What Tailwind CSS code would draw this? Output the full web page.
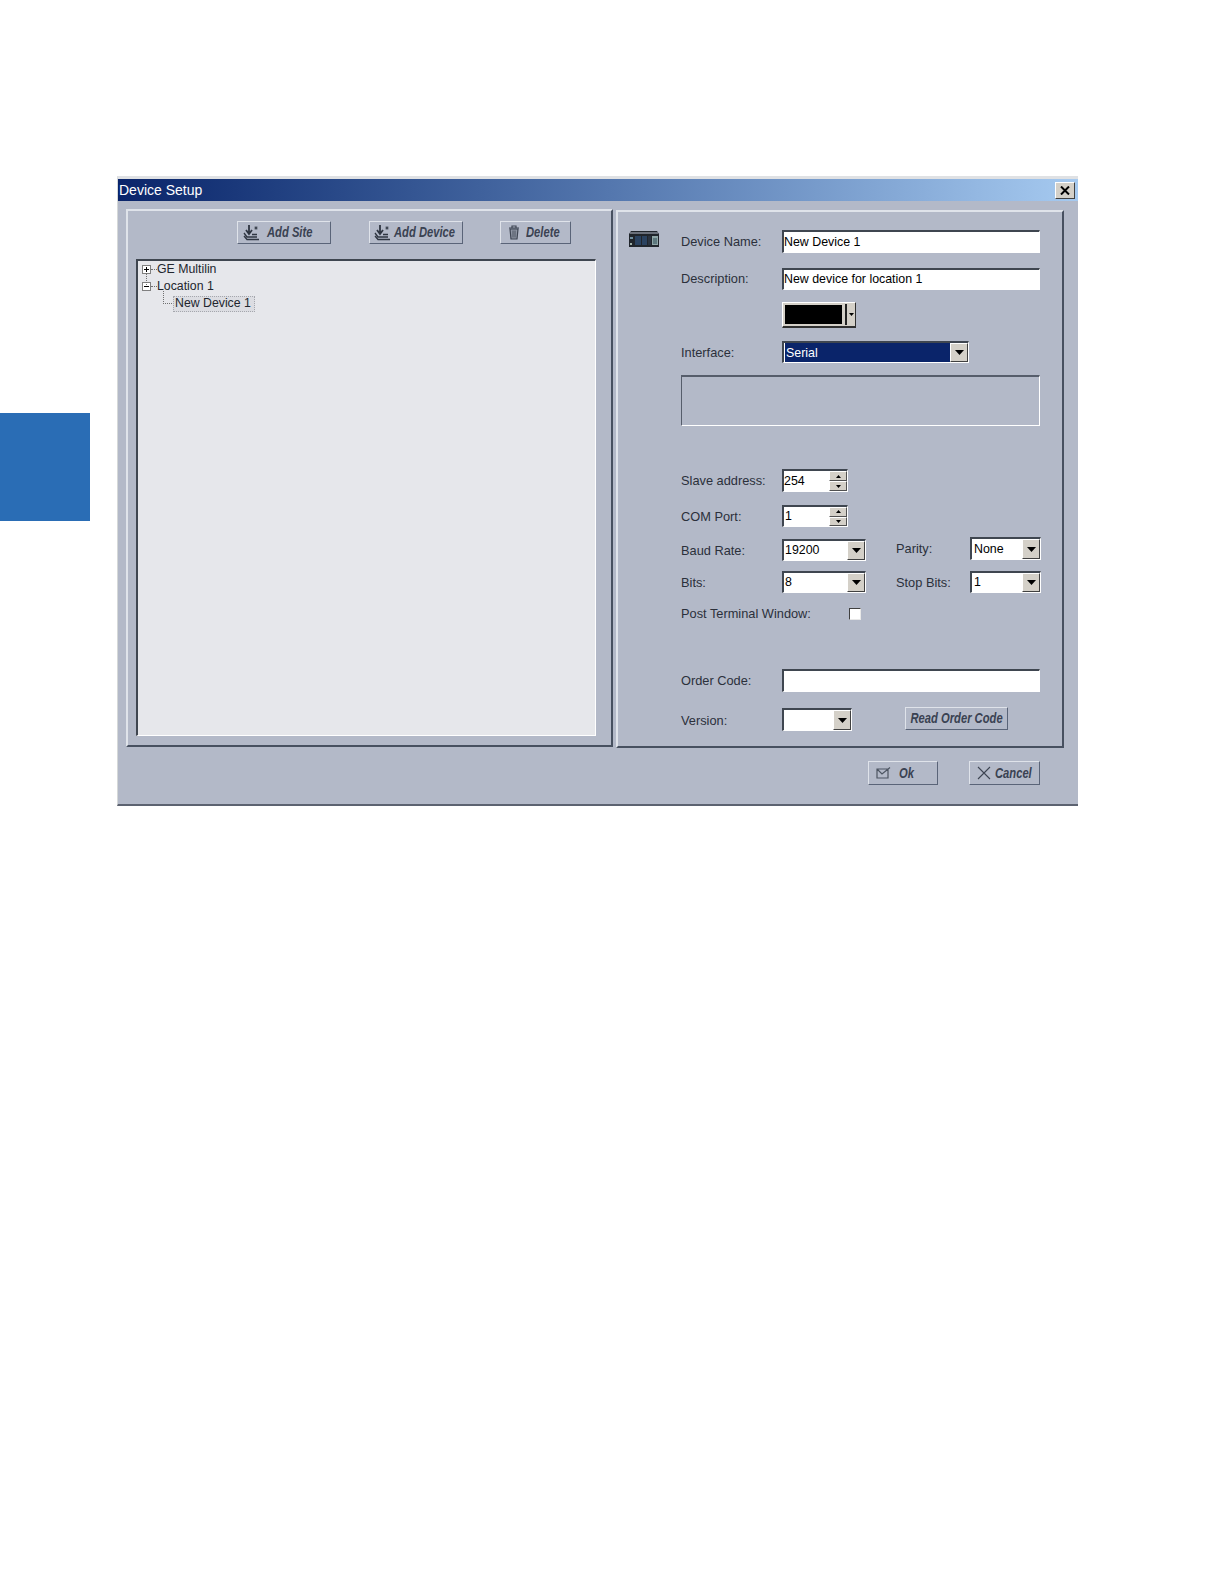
<!DOCTYPE html>
<html lang="en">
<head>
  <meta charset="UTF-8" />
  <title>Device Setup</title>
  <script src="https://cdn.jsdelivr.net/npm/@tailwindcss/browser@4"></script>
</head>
<body class="bg-white min-h-screen flex items-start [font-family:'Liberation_Sans',Arial,sans-serif] text-[12.8px] text-[#2b303b]">

  <!-- chapter tab -->
  <div class="w-[90px] h-[108px] mt-[413px] shrink-0 bg-[#2a6db5]"></div>

  <!-- dialog window -->
  <div class="ml-[27px] mt-[176px] w-[961px] h-[630px] shrink-0 bg-[#b3b9c8] border-t-[3px] border-t-[#dfe1e4] border-l border-l-[#d5d8d8] border-b-2 border-b-[#5c6270]">

    <!-- title bar -->
    <div class="h-[22px] flex items-center justify-between bg-gradient-to-r from-[#0a246a] to-[#a6caf0] pr-[3px]">
      <span class="text-white text-[14px] pl-px">Device Setup</span>
      <button class="w-[20px] h-[17px] flex items-center justify-center bg-[#d4d0c8] border border-t-white border-l-white border-r-[#404040] border-b-[#404040]">
        <svg width="10" height="9" viewBox="0 0 10 9"><path d="M1 0.5 L9 8.5 M9 0.5 L1 8.5" stroke="#000" stroke-width="2" /></svg>
      </button>
    </div>

    <div class="flex pl-[8px] pt-[8px]">

      <!-- left panel -->
      <div class="w-[487px] h-[538px] border-2 border-t-[#dfe3ea] border-l-[#dfe3ea] border-r-[#475060] border-b-[#475060]">
        <div class="flex ml-[109px] mt-[10px]">
          <button class="w-[94px] h-[23px] flex items-center pl-[5px] gap-[7px] border border-t-[#dfe3ea] border-l-[#dfe3ea] border-r-[#5a6478] border-b-[#5a6478] text-[#3a4252] font-bold italic text-[14px] whitespace-nowrap">
            <svg class="shrink-0" width="17" height="17" viewBox="0 0 17 17" fill="none" stroke="#2f3642"><path d="M6 1 V9 M3 6 L6 10 L9 6" stroke-width="1.8" /><path d="M1 9 L4 13 H14 M1 12 L4 15.5 H16 M9 10.5 H14" stroke-width="1.3" /><path d="M13 2 V6 M11.2 4 H14.8 M11.8 2.8 L14.2 5.2 M14.2 2.8 L11.8 5.2" stroke-width="0.7" /></svg>
            <span class="inline-block origin-left scale-x-[0.8]">Add Site</span>
          </button>
          <button class="w-[94px] h-[23px] ml-[38px] flex items-center pl-[4px] gap-[3px] border border-t-[#dfe3ea] border-l-[#dfe3ea] border-r-[#5a6478] border-b-[#5a6478] text-[#3a4252] font-bold italic text-[14px] whitespace-nowrap">
            <svg class="shrink-0" width="17" height="17" viewBox="0 0 17 17" fill="none" stroke="#2f3642"><path d="M6 1 V9 M3 6 L6 10 L9 6" stroke-width="1.8" /><path d="M1 9 L4 13 H14 M1 12 L4 15.5 H16 M9 10.5 H14" stroke-width="1.3" /><path d="M13 2 V6 M11.2 4 H14.8 M11.8 2.8 L14.2 5.2 M14.2 2.8 L11.8 5.2" stroke-width="0.7" /></svg>
            <span class="inline-block origin-left scale-x-[0.8]">Add Device</span>
          </button>
          <button class="w-[71px] h-[23px] ml-[37px] flex items-center pl-[7px] gap-[6px] border border-t-[#dfe3ea] border-l-[#dfe3ea] border-r-[#5a6478] border-b-[#5a6478] text-[#3a4252] font-bold italic text-[14px] whitespace-nowrap">
            <svg class="shrink-0" width="12" height="15" viewBox="0 0 12 15" fill="none" stroke="#3d4452"><path d="M1 3 H11 M4 3 V1 H8 V3" stroke-width="1.2" /><path d="M2 4 L3 14 H9 L10 4 Z" fill="#8d94a3" stroke-width="1.2" /><path d="M5 5.5 V12.5 M7 5.5 V12.5" stroke-width="0.8" /></svg>
            <span class="inline-block origin-left scale-x-[0.8]">Delete</span>
          </button>
        </div>

        <!-- tree -->
        <div class="relative w-[460px] h-[477px] ml-[8px] mt-[15px] text-[12.3px] bg-[#e6e7eb] border-t-2 border-l-2 border-t-[#3f4650] border-l-[#3f4650] border-r border-b border-r-white border-b-white text-[#22262e]">
          <div class="absolute left-[8px] top-[12px] h-[12px] border-l border-dotted border-[#707070]"></div>
          <div class="absolute left-[25px] top-[30px] h-[13px] w-[9px] border-l border-b border-dotted border-[#707070]"></div>

          <div class="h-[17px] flex items-center pl-[4px]">
            <span class="w-[9px] h-[9px] bg-white border border-[#808080] flex items-center justify-center">
              <svg width="7" height="7" viewBox="0 0 7 7"><path d="M1 3.5 H6 M3.5 1 V6" stroke="#000" /></svg>
            </span>
            <span class="w-[6px] border-t border-dotted border-[#707070]"></span>
            <span class="whitespace-nowrap">GE Multilin</span>
          </div>
          <div class="h-[17px] flex items-center pl-[4px]">
            <span class="w-[9px] h-[9px] bg-white border border-[#808080] flex items-center justify-center">
              <svg width="7" height="7" viewBox="0 0 7 7"><path d="M1 3.5 H6" stroke="#000" /></svg>
            </span>
            <span class="w-[6px] border-t border-dotted border-[#707070]"></span>
            <span class="whitespace-nowrap">Location 1</span>
          </div>
          <div class="h-[17px] flex items-center pl-[35px]">
            <span class="h-[16px] w-[82px] pl-[1px] flex items-center whitespace-nowrap bg-[#dcdde2] border border-dotted border-[#a5a7ad]">New Device 1</span>
          </div>
        </div>
      </div>

      <!-- right panel -->
      <div class="flex ml-[3px] mt-px w-[448px] h-[538px] border-2 border-t-[#dfe3ea] border-l-[#dfe3ea] border-r-[#475060] border-b-[#475060]">
        <div class="w-[63px] pl-[11px] pt-[19px] shrink-0">
          <svg width="30" height="16" viewBox="0 0 30 16">
            <path d="M2 0 H28 L30 3 V16 H0 V3 Z" fill="#20252c" />
            <rect x="1" y="1" width="28" height="2" fill="#6a707b" />
            <rect x="1" y="6" width="3" height="2" fill="#6f8fa0" />
            <rect x="1" y="12" width="2" height="2" fill="#9fb0a8" />
            <rect x="6" y="5" width="6" height="9" fill="#2a4260" />
            <rect x="13" y="5" width="5" height="9" fill="#2a4260" />
            <rect x="19" y="5" width="3" height="9" fill="#2a3340" />
            <rect x="23" y="5" width="6" height="9" fill="#8fa6a8" />
            <path d="M24 8 H28 M24 10 H28 M24 12 H28" stroke="#2c4a55" />
          </svg>
        </div>

        <div class="flex flex-col">
          <div class="flex items-center mt-[18px]">
            <span class="w-[101px] pt-[1px]">Device Name:</span>
            <div class="w-[258px] h-[23px] flex items-center text-[12.4px] bg-white text-black border-t-2 border-l-2 border-t-[#3f4650] border-l-[#3f4650] border-r border-b border-r-white border-b-white">New Device 1</div>
          </div>
          <div class="flex items-center mt-[15px]">
            <span class="w-[101px]">Description:</span>
            <div class="w-[258px] h-[22px] flex items-center text-[12.4px] bg-white text-black border-t-2 border-l-2 border-t-[#3f4650] border-l-[#3f4650] border-r border-b border-r-white border-b-white">New device for location 1</div>
          </div>

          <!-- colour picker -->
          <div class="flex mt-[12px] pl-[101px]">
            <div class="w-[74px] h-[26px] flex items-center pl-[2px] bg-[#d4d0c8] border border-t-white border-l-white border-r-[#303030] border-b-[#303030] border-b-2">
              <div class="w-[57px] h-[19px] bg-black"></div>
              <div class="w-[2px] h-[21px] ml-[3px] bg-[#222]"></div>
              <svg class="ml-[2px]" width="5" height="3" viewBox="0 0 5 3"><path d="M0 0 H5 L2.5 3 Z" fill="#000" /></svg>
            </div>
          </div>

          <div class="flex items-center mt-[13px]">
            <span class="w-[101px] pt-[2px]">Interface:</span>
            <div class="w-[187px] h-[22px] flex items-center justify-between text-[12.4px] bg-white border-t-2 border-l-2 border-t-[#3f4650] border-l-[#3f4650] border-r border-b border-r-white border-b-white">
              <span class="flex-1 h-full ml-px flex items-center pl-px pt-px bg-[#0a246a] text-white">Serial</span>
              <span class="w-[18px] h-full flex items-center justify-center bg-[#d4d0c8] border border-t-white border-l-white border-r-[#404040] border-b-[#404040]">
                <svg width="9" height="5" viewBox="0 0 9 5"><path d="M0 0 H9 L4.5 5 Z" fill="#000" /></svg>
              </span>
            </div>
          </div>

          <div class="w-[359px] h-[51px] mt-[12px] border border-t-2 border-t-[#565d6b] border-l-[#565d6b] border-r-white border-b-white"></div>

          <div class="flex items-center mt-[43px]">
            <span class="w-[101px]">Slave address:</span>
            <div class="w-[66px] h-[23px] flex items-center justify-between text-[12.4px] bg-white text-black border-t-2 border-l-2 border-t-[#3f4650] border-l-[#3f4650] border-r border-b border-r-white border-b-white">
              <span>254</span>
              <span class="w-[18px] h-full flex flex-col">
                <span class="flex-1 flex items-center justify-center bg-[#d4d0c8] border border-t-white border-l-white border-r-[#505050] border-b-[#505050]"><svg width="5" height="3" viewBox="0 0 5 3"><path d="M0 3 H5 L2.5 0 Z" fill="#000" /></svg></span>
                <span class="flex-1 flex items-center justify-center bg-[#d4d0c8] border border-t-white border-l-white border-r-[#505050] border-b-[#505050]"><svg width="5" height="3" viewBox="0 0 5 3"><path d="M0 0 H5 L2.5 3 Z" fill="#000" /></svg></span>
              </span>
            </div>
          </div>
          <div class="flex items-center mt-[13px]">
            <span class="w-[101px] pt-[2px]">COM Port:</span>
            <div class="w-[66px] h-[22px] flex items-center justify-between text-[12.4px] pl-px bg-white text-black border-t-2 border-l-2 border-t-[#3f4650] border-l-[#3f4650] border-r border-b border-r-white border-b-white">
              <span>1</span>
              <span class="w-[18px] h-full flex flex-col">
                <span class="flex-1 flex items-center justify-center bg-[#d4d0c8] border border-t-white border-l-white border-r-[#505050] border-b-[#505050]"><svg width="5" height="3" viewBox="0 0 5 3"><path d="M0 3 H5 L2.5 0 Z" fill="#000" /></svg></span>
                <span class="flex-1 flex items-center justify-center bg-[#d4d0c8] border border-t-white border-l-white border-r-[#505050] border-b-[#505050]"><svg width="5" height="3" viewBox="0 0 5 3"><path d="M0 0 H5 L2.5 3 Z" fill="#000" /></svg></span>
              </span>
            </div>
          </div>

          <div class="flex items-center mt-[12px]">
            <span class="w-[101px] pt-[2px]">Baud Rate:</span>
            <div class="w-[84px] h-[22px] flex items-center justify-between text-[12.4px] pl-px bg-white text-black border-t-2 border-l-2 border-t-[#3f4650] border-l-[#3f4650] border-r border-b border-r-white border-b-white">
              <span>19200</span>
              <span class="w-[18px] h-full flex items-center justify-center bg-[#d4d0c8] border border-t-white border-l-white border-r-[#404040] border-b-[#404040]"><svg width="9" height="5" viewBox="0 0 9 5"><path d="M0 0 H9 L4.5 5 Z" fill="#000" /></svg></span>
            </div>
            <span class="w-[74px] ml-[30px] -mt-[2px]">Parity:</span>
            <div class="w-[71px] h-[23px] -mt-[3px] flex items-center justify-between text-[12.4px] pl-[2px] bg-white text-black border-t-2 border-l-2 border-t-[#3f4650] border-l-[#3f4650] border-r border-b border-r-white border-b-white">
              <span>None</span>
              <span class="w-[18px] h-full flex items-center justify-center bg-[#d4d0c8] border border-t-white border-l-white border-r-[#404040] border-b-[#404040]"><svg width="9" height="5" viewBox="0 0 9 5"><path d="M0 0 H9 L4.5 5 Z" fill="#000" /></svg></span>
            </div>
          </div>
          <div class="flex items-center mt-[10px]">
            <span class="w-[101px] pt-[2px]">Bits:</span>
            <div class="w-[84px] h-[22px] flex items-center justify-between text-[12.4px] pl-px bg-white text-black border-t-2 border-l-2 border-t-[#3f4650] border-l-[#3f4650] border-r border-b border-r-white border-b-white">
              <span>8</span>
              <span class="w-[18px] h-full flex items-center justify-center bg-[#d4d0c8] border border-t-white border-l-white border-r-[#404040] border-b-[#404040]"><svg width="9" height="5" viewBox="0 0 9 5"><path d="M0 0 H9 L4.5 5 Z" fill="#000" /></svg></span>
            </div>
            <span class="w-[74px] ml-[30px] pt-[2px]">Stop Bits:</span>
            <div class="w-[71px] h-[22px] flex items-center justify-between text-[12.4px] pl-[2px] bg-white text-black border-t-2 border-l-2 border-t-[#3f4650] border-l-[#3f4650] border-r border-b border-r-white border-b-white">
              <span>1</span>
              <span class="w-[18px] h-full flex items-center justify-center bg-[#d4d0c8] border border-t-white border-l-white border-r-[#404040] border-b-[#404040]"><svg width="9" height="5" viewBox="0 0 9 5"><path d="M0 0 H9 L4.5 5 Z" fill="#000" /></svg></span>
            </div>
          </div>

          <div class="flex items-center h-[13px] mt-[14px]">
            <span class="w-[168px]">Post Terminal Window:</span>
            <span class="w-[12px] h-[12px] mt-[1px] bg-white border border-t-[#404040] border-l-[#404040] border-r-[#e8e8e8] border-b-[#e8e8e8]"></span>
          </div>

          <div class="flex items-center mt-[49px]">
            <span class="w-[101px]">Order Code:</span>
            <div class="w-[258px] h-[23px] bg-white border-t-2 border-l-2 border-t-[#3f4650] border-l-[#3f4650] border-r border-b border-r-white border-b-white"></div>
          </div>
          <div class="flex items-center mt-[16px]">
            <span class="w-[101px] pt-[2px]">Version:</span>
            <div class="w-[70px] h-[23px] flex justify-end bg-white border-t-2 border-l-2 border-t-[#3f4650] border-l-[#3f4650] border-r border-b border-r-white border-b-white">
              <span class="w-[18px] h-full flex items-center justify-center bg-[#d4d0c8] border border-t-white border-l-white border-r-[#404040] border-b-[#404040]"><svg width="9" height="5" viewBox="0 0 9 5"><path d="M0 0 H9 L4.5 5 Z" fill="#000" /></svg></span>
            </div>
            <button class="w-[103px] h-[23px] ml-[53px] -mt-[2px] flex items-center justify-center border border-t-[#dfe3ea] border-l-[#dfe3ea] border-r-[#5a6478] border-b-[#5a6478] text-[#3a4252] font-bold italic text-[14px] whitespace-nowrap">
              <span class="inline-block scale-x-[0.8]">Read Order Code</span>
            </button>
          </div>
        </div>
      </div>
    </div>

    <!-- bottom buttons -->
    <div class="flex pl-[750px] mt-[13px]">
      <button class="w-[70px] h-[24px] flex items-center pl-[7px] gap-[8px] border border-t-[#dfe3ea] border-l-[#dfe3ea] border-r-[#5a6478] border-b-[#5a6478] text-[#3a4252] font-bold italic text-[14px] whitespace-nowrap">
        <svg class="shrink-0" width="15" height="12" viewBox="0 0 15 12" fill="none" stroke="#4d5562"><path d="M1 2 H12 V11 H1 Z M1 2 L6 7 L14 0.5" stroke-width="1.2" /></svg>
        <span class="inline-block origin-left scale-x-[0.8]">Ok</span>
      </button>
      <button class="w-[71px] h-[24px] ml-[31px] flex items-center pl-[7px] gap-[4px] border border-t-[#dfe3ea] border-l-[#dfe3ea] border-r-[#5a6478] border-b-[#5a6478] text-[#3a4252] font-bold italic text-[14px] whitespace-nowrap">
        <svg class="shrink-0" width="14" height="14" viewBox="0 0 14 14" fill="none" stroke="#3d4452"><path d="M1 1 L13 13 M13 1 L1 13" stroke-width="1.1" /></svg>
        <span class="inline-block origin-left scale-x-[0.8]">Cancel</span>
      </button>
    </div>
  </div>
</body>
</html>
